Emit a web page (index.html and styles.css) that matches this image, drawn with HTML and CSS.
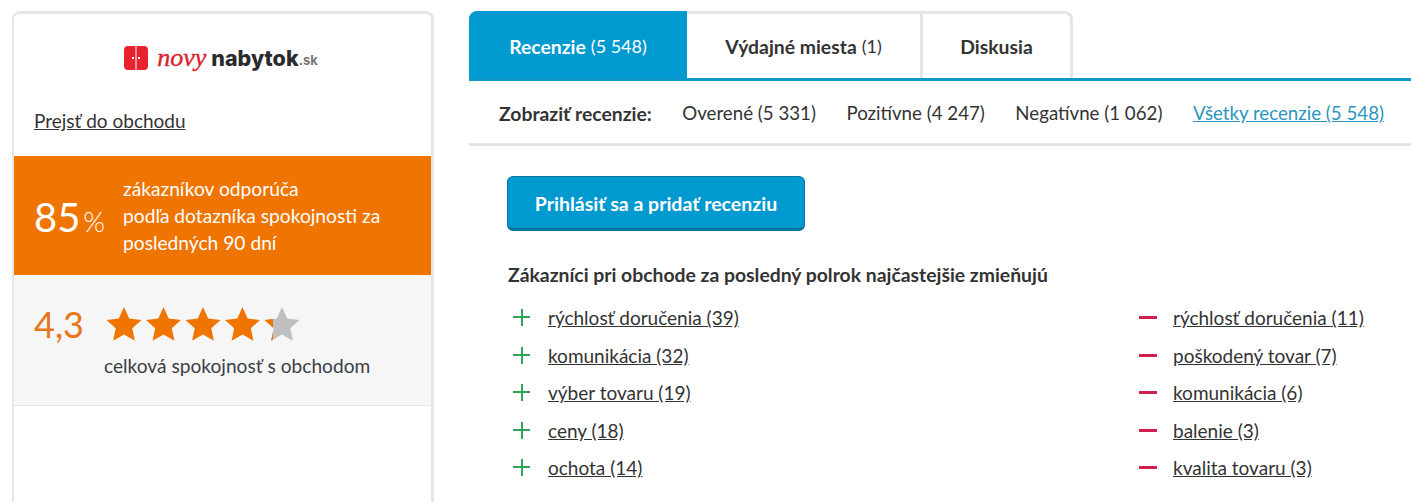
FILE: index.html
```html
<!DOCTYPE html>
<html lang="sk">
<head>
<meta charset="utf-8">
<title>novynabytok.sk – recenzie</title>
<link rel="stylesheet" href="styles.css">
</head>
<body>
<div class="page">
  <aside class="side">
    <div class="logo">
      <svg class="logo-icon" width="24" height="24" viewBox="0 0 24 24"><rect width="24" height="24" rx="4" fill="#e8212e"/><rect x="11.5" width="1" height="24" fill="#fff"/><rect x="8" y="11" width="2" height="2" fill="#fff"/><rect x="14" y="11" width="2" height="2" fill="#fff"/></svg>
      <span class="logo-novy">novy</span><span class="logo-nab">nabytok</span><span class="logo-sk">.sk</span>
    </div>
    <a class="shop-link" href="#">Prejsť do obchodu</a>
    <div class="recommend">
      <div class="pct"><span class="pct-num">85</span> <span class="pct-sign">%</span></div>
      <div class="pct-text">zákazníkov odporúča<br>podľa dotazníka spokojnosti za<br>posledných 90 dní</div>
    </div>
    <div class="rating">
      <div class="rating-top">
        <span class="score">4,3</span>
        <svg class="stars" width="198" height="36" viewBox="0 0 198 36">
          <defs>
            <path id="star" d="M18 1l5.2 11.6 12.3 1.3-9.2 8.4 2.6 12.5L18 28.4 7.1 34.8l2.6-12.5L.5 13.9l12.3-1.3z"/>
            <clipPath id="part"><rect x="158" y="0" width="9" height="36"/></clipPath>
          </defs>
          <use href="#star" x="0" fill="#f07400"/>
          <use href="#star" x="39.5" fill="#f07400"/>
          <use href="#star" x="79" fill="#f07400"/>
          <use href="#star" x="118.5" fill="#f07400"/>
          <use href="#star" x="158" fill="#bfbfbf"/>
          <g clip-path="url(#part)"><use href="#star" x="158" fill="#f07400"/></g>
        </svg>
      </div>
      <div class="rating-label">celková spokojnosť s obchodom</div>
    </div>
  </aside>
  <main class="content">
    <nav class="tabs">
      <a class="tab tab-active" href="#"><b>Recenzie</b> (5 548)</a>
      <a class="tab tab-second" href="#"><b>Výdajné miesta</b> (1)</a>
      <a class="tab tab-third" href="#"><b>Diskusia</b></a>
    </nav>
    <div class="filters">
      <b class="filters-label">Zobraziť recenzie:</b>
      <span>Overené (5 331)</span>
      <span>Pozitívne (4 247)</span>
      <span>Negatívne (1 062)</span>
      <a class="filter-link" href="#">Všetky recenzie (5 548)</a>
    </div>
    <div class="body-area">
      <a class="cta" href="#">Prihlásiť sa a pridať recenziu</a>
      <h2 class="mentions-title">Zákazníci pri obchode za posledný polrok najčastejšie zmieňujú</h2>
      <div class="mentions">
        <ul class="list list-plus">
          <li><i class="sign"></i><a href="#">rýchlosť doručenia (39)</a></li>
          <li><i class="sign"></i><a href="#">komunikácia (32)</a></li>
          <li><i class="sign"></i><a href="#">výber tovaru (19)</a></li>
          <li><i class="sign"></i><a href="#">ceny (18)</a></li>
          <li><i class="sign"></i><a href="#">ochota (14)</a></li>
        </ul>
        <ul class="list list-minus">
          <li><i class="sign"></i><a href="#">rýchlosť doručenia (11)</a></li>
          <li><i class="sign"></i><a href="#">poškodený tovar (7)</a></li>
          <li><i class="sign"></i><a href="#">komunikácia (6)</a></li>
          <li><i class="sign"></i><a href="#">balenie (3)</a></li>
          <li><i class="sign"></i><a href="#">kvalita tovaru (3)</a></li>
        </ul>
      </div>
    </div>
  </main>
</div>
</body>
</html>
```
FILE: styles.css
```css
* { box-sizing: border-box; }
html, body { margin: 0; height: 100%; overflow: hidden; background: #fff; }
body { font-family: "Lato", "Open Sans", sans-serif; font-size: 19px; color: #333; }
b, h2 { font-size: 19.35px; }
a { color: inherit; }
.page { display: flex; align-items: stretch; padding: 11px 0 0 12px; gap: 35px; height: 100%; }

.side { flex: 0 0 422px; border-style: solid; border-color: #e6e6e6; border-width: 3px 3px 0 2px; border-radius: 8px 8px 0 0; }
.logo { display: flex; align-items: center; justify-content: center; height: 60px; padding: 27px 3px 0 0; }
.logo-icon { margin-right: 9px; }
.logo-novy { font-family: "Liberation Serif", serif; font-style: italic; font-size: 26px; color: #d8242f; -webkit-text-stroke: 0.4px #d8242f; margin-right: 5px; line-height: 1; }
.logo-nab { font-family: "Inter", sans-serif; font-weight: 800; font-size: 21.5px; color: #2b2b2b; }
.logo-sk { font-family: "Inter", sans-serif; font-weight: 700; font-size: 13px; color: #777; align-self: center; padding-top: 5px; }
.shop-link { display: block; margin: 35px 0 0 20px; line-height: 24px; height: 47px; }

.recommend { display: flex; align-items: center; height: 119px; background: #f07400; color: #fff; padding-left: 20px; }
.pct { flex: 0 0 89px; white-space: nowrap; padding-top: 2px; }
.pct-num { font-size: 40px; }
.pct-sign { font-size: 28px; font-weight: 300; margin-left: -2px; }
.pct-text { line-height: 27px; font-size: 19.2px; }

.rating { height: 131px; background: #f6f6f6; border-bottom: 1px solid #e6e6e6; padding: 28px 0 0 20px; }
.rating-top { display: flex; align-items: center; height: 42px; }
.score { font-size: 36px; color: #e8751a; width: 71.5px; }
.stars { display: block; }
.rating-label { margin: 9px 0 0 70px; color: #3a3f47; font-size: 19.15px; }

.content { flex: 1; min-width: 0; }
.tabs { display: flex; height: 70px; border-bottom: 3px solid #0f98c8; font-size: 18px; }
.tab { display: flex; align-items: center; justify-content: center; text-decoration: none; height: 67px; border-top: 3px solid #e6e6e6; }
.tab b { margin-right: 5px; }
.tab-active { width: 218px; background: #0099d0; border-color: #0099d0; color: #fff; border-radius: 8px 0 0 0; }
.tab-second { width: 236px; border-right: 3px solid #e6e6e6; }
.tab-third { width: 150px; border-right: 3px solid #e6e6e6; border-radius: 0 8px 0 0; }
.tab-third b { margin-right: 0; }

.filters { display: flex; align-items: center; gap: 30.5px; height: 65px; padding: 2px 0 0 30px; border-bottom: 3px solid #e6e6e6; font-size: 18.7px; }
.filter-link { color: #2a95c0; }

.body-area { padding: 30px 0 0 38px; }
.cta { display: flex; align-items: center; justify-content: center; width: 298px; height: 55px; padding-top: 1px; background: #0099d0; border: 1px solid #07749c; border-bottom-width: 3px; border-radius: 6px; color: #fff; font-weight: 700; font-size: 19.5px; text-decoration: none; }
.mentions-title { margin: 31px 0 0 1px; font-weight: 700; line-height: 26px; }
.mentions { display: flex; margin-top: 11px; }
.list { list-style: none; margin: 0; padding: 0; }
.list-plus { width: 632px; padding-left: 6px; }
.list li { display: flex; align-items: center; height: 37.5px; }
.sign { position: relative; flex: 0 0 17px; height: 17px; margin-right: 18px; display: block; }
.sign::before { content: ""; position: absolute; left: 0; right: 0; top: 7px; height: 2px; }
.list-plus .sign::before { background: #2fa55a; }
.list-plus .sign::after { content: ""; position: absolute; top: 0; bottom: 0; left: 7.5px; width: 2px; background: #2fa55a; }
.list-minus .sign { flex-basis: 18px; margin-right: 16px; }
.list-minus .sign::before { background: #d21f4a; height: 3px; }
```
